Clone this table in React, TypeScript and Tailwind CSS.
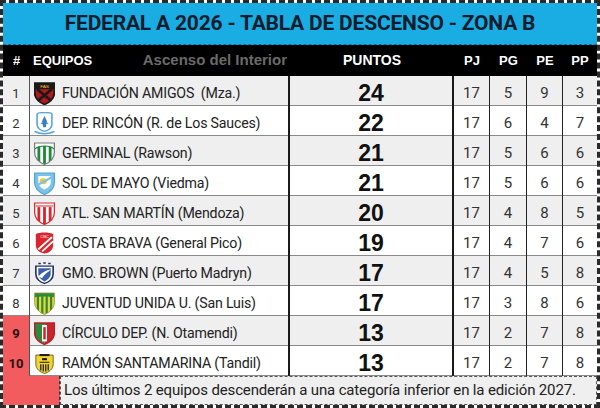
import React from "react";

type Team = {
  pos: number;
  name: string;
  place: string;
  pts: number;
  pj: number;
  pg: number;
  pe: number;
  pp: number;
};

const teams: Team[] = [
  { pos: 1, name: "FUNDACIÓN AMIGOS", place: " (Mza.)", pts: 24, pj: 17, pg: 5, pe: 9, pp: 3 },
  { pos: 2, name: "DEP. RINCÓN", place: "(R. de Los Sauces)", pts: 22, pj: 17, pg: 6, pe: 4, pp: 7 },
  { pos: 3, name: "GERMINAL", place: "(Rawson)", pts: 21, pj: 17, pg: 5, pe: 6, pp: 6 },
  { pos: 4, name: "SOL DE MAYO", place: "(Viedma)", pts: 21, pj: 17, pg: 5, pe: 6, pp: 6 },
  { pos: 5, name: "ATL. SAN MARTÍN", place: "(Mendoza)", pts: 20, pj: 17, pg: 4, pe: 8, pp: 5 },
  { pos: 6, name: "COSTA BRAVA", place: "(General Pico)", pts: 19, pj: 17, pg: 4, pe: 7, pp: 6 },
  { pos: 7, name: "GMO. BROWN", place: "(Puerto Madryn)", pts: 17, pj: 17, pg: 4, pe: 5, pp: 8 },
  { pos: 8, name: "JUVENTUD UNIDA U.", place: "(San Luis)", pts: 17, pj: 17, pg: 3, pe: 8, pp: 6 },
  { pos: 9, name: "CÍRCULO DEP.", place: "(N. Otamendi)", pts: 13, pj: 17, pg: 2, pe: 7, pp: 8 },
  { pos: 10, name: "RAMÓN SANTAMARINA", place: "(Tandil)", pts: 13, pj: 17, pg: 2, pe: 7, pp: 8 },
];

const SHIELD = "M2 2 H18 V11 C18 17 14 21 10 23 C6 21 2 17 2 11 Z";

const Stripes: React.FC<{ id: string; a: string; b: string; n: number }> = ({ id, a, b, n }) => (
  <g clipPath={`url(#${id})`}>
    <rect x="0" y="0" width="20" height="24" fill={a} />
    {Array.from({ length: n }).map((_, i) =>
      i % 2 === 1 ? <rect key={i} x={2 + (16 / n) * i} y="0" width={16 / n} height="24" fill={b} /> : null
    )}
  </g>
);

const Badge: React.FC<{ pos: number }> = ({ pos }) => {
  const id = `clip${pos}`;
  let body: React.ReactNode = null;
  switch (pos) {
    case 1:
      body = (
        <>
          <path d={SHIELD} fill="#b3171b" stroke="#1a1a1a" strokeWidth="1.6" />
          <g clipPath={`url(#${id})`}>
            <rect x="0" y="2" width="20" height="6" fill="#1a1a1a" />
            <path d="M4 8 L16 20 M16 8 L4 20" stroke="#1a1a1a" strokeWidth="2.4" />
          </g>
          <text x="10" y="7" fontSize="4" fill="#f2c230" textAnchor="middle" fontFamily="Liberation Sans">FAS</text>
        </>
      );
      break;
    case 2:
      body = (
        <>
          <path d="M4 3 C4 1 16 1 16 3 V13 C16 17 13 19 10 20 C7 19 4 17 4 13 Z" fill="#ffffff" stroke="#5aa7d8" strokeWidth="1.3" />
          <path d="M10 5 L12 10 L11 16 H9 L8 10 Z" fill="#3b7fc0" />
          <path d="M7 12 H13" stroke="#3b7fc0" strokeWidth="1" />
          <path d="M2 20 C6 23 14 23 18 20" stroke="#5aa7d8" strokeWidth="1.6" fill="none" />
        </>
      );
      break;
    case 3:
      body = (
        <>
          <Stripes id={id} a="#ffffff" b="#1f8a3a" n={7} />
          <g clipPath={`url(#${id})`}>
            <path d="M0 0 H20 V8 C16 4 4 4 0 8 Z" fill="#ffffff" />
            <path d="M2 8 C6 4 14 4 18 8" stroke="#1f8a3a" strokeWidth="1" fill="none" />
          </g>
          <path d={SHIELD} fill="none" stroke="#7a7a7a" strokeWidth="1" />
        </>
      );
      break;
    case 4:
      body = (
        <>
          <path d={SHIELD} fill="#7cc3ea" stroke="#4fa3d6" strokeWidth="1" />
          <path d="M5 5 H15 V11 C15 15 12 17 10 18 C8 17 5 15 5 11 Z" fill="#ffffff" />
          <circle cx="9" cy="10" r="3" fill="#f0c43c" />
          <path d="M4 14 L16 6" stroke="#7cc3ea" strokeWidth="2" />
        </>
      );
      break;
    case 5:
      body = (
        <>
          <Stripes id={id} a="#ffffff" b="#d7262e" n={7} />
          <g clipPath={`url(#${id})`}>
            <rect x="0" y="0" width="20" height="6" fill="#ffffff" />
            <path d="M3 5 H17" stroke="#d7262e" strokeWidth="1" />
          </g>
          <path d={SHIELD} fill="none" stroke="#d7262e" strokeWidth="1" />
        </>
      );
      break;
    case 6:
      body = (
        <>
          <path d="M3 3 C6 1 14 1 17 3 V14 C17 19 13 22 10 22 C7 22 3 19 3 14 Z" fill="#d9252e" />
          <path d="M5 18 L16 6 M8 20 L17 10" stroke="#ffffff" strokeWidth="1.6" />
          <text x="10" y="7" fontSize="3.5" fill="#ffffff" textAnchor="middle" fontFamily="Liberation Sans">CBC</text>
        </>
      );
      break;
    case 7:
      body = (
        <>
          <path d="M3 5 H17 V13 C17 18 13 21 10 22 C7 21 3 18 3 13 Z" fill="#ffffff" stroke="#23315f" strokeWidth="1.3" />
          <path d="M5 7 H15 V13 C15 16 12 19 10 20 C8 19 5 16 5 13 Z" fill="#3b5fa8" />
          <path d="M5 15 C9 10 12 9 16 8 C12 11 10 13 8 17 Z" fill="#ffffff" />
          <path d="M5 2.5 H7 M9 2 H11 M13 2.5 H15" stroke="#23315f" strokeWidth="1.4" />
        </>
      );
      break;
    case 8:
      body = (
        <>
          <Stripes id={id} a="#e9d43a" b="#2c8a3a" n={9} />
          <g clipPath={`url(#${id})`}>
            <path d="M0 0 H20 V7 C15 5 5 5 0 7 Z" fill="#2c8a3a" />
          </g>
          <path d={SHIELD} fill="none" stroke="#9a9a3a" strokeWidth="0.8" />
        </>
      );
      break;
    case 9:
      body = (
        <>
          <g clipPath={`url(#${id})`}>
            <rect x="0" y="0" width="10" height="24" fill="#2a8a3e" />
            <rect x="10" y="0" width="10" height="24" fill="#c8262d" />
            <rect x="8" y="4" width="4" height="16" fill="#ffffff" />
            <rect x="9" y="6" width="2" height="12" fill="#c8262d" />
          </g>
          <path d={SHIELD} fill="none" stroke="#b72229" strokeWidth="1.4" />
        </>
      );
      break;
    default:
      body = (
        <>
          <path d="M3 4 H17 V13 C17 18 13 21 10 22 C7 21 3 18 3 13 Z" fill="#f2d431" stroke="#6b5a10" strokeWidth="0.8" />
          <path d="M6 3 H14 V5 H6 Z" fill="#1a1a1a" />
          <path d="M6 11 H14 M7 13 V19 M9 13 V20 M11 13 V20 M13 13 V19" stroke="#1a1a1a" strokeWidth="1" />
          <path d="M8 7 H12 V9 H8 Z" fill="#1a1a1a" />
        </>
      );
  }
  return (
    <svg width="21" height="23" viewBox="1.5 1 17 22.5" preserveAspectRatio="none" className="shrink-0">
      <defs>
        <clipPath id={id}>
          <path d={SHIELD} />
        </clipPath>
      </defs>
      {body}
    </svg>
  );
};

const cols = "grid grid-cols-[27px_260px_164px_36px_37px_36px_34px]";
const roboto = { fontFamily: '"Roboto", "Liberation Sans", sans-serif' };

export default function App() {
  return (
    <div
      className="w-[600px] h-[408px] overflow-hidden bg-white border-[3px] border-dashed border-[#2a2a2a]"
      style={{ fontFamily: '"Liberation Sans", Arial, sans-serif' }}
    >
      <div className="h-[42px] bg-[#1aade4] flex items-center justify-center border-b border-dashed border-[#0e6f96]">
        <h1 className="text-[21px] font-bold text-[#0f1c2c] tracking-[-0.2px]" style={roboto}>
          FEDERAL A 2026 - TABLA DE DESCENSO - ZONA B
        </h1>
      </div>

      <div className={`${cols} h-[31px] bg-black text-white font-bold text-[13px] items-center`}>
        <div className="text-center">#</div>
        <div className="flex items-center justify-between pl-[3px] pr-[3px]">
          <span>EQUIPOS</span>
          <span className="text-[#6a6a6a] text-[15px]">Ascenso del Interior</span>
        </div>
        <div className="text-center text-[14px]">PUNTOS</div>
        <div className="text-center">PJ</div>
        <div className="text-center">PG</div>
        <div className="text-center">PE</div>
        <div className="text-center">PP</div>
      </div>

      {teams.map((t) => {
        const relegated = t.pos >= 9;
        const bg = t.pos % 2 === 1 ? "bg-[#efefef]" : "bg-white";
        return (
          <div key={t.pos} className={`${cols} h-[30px] ${bg} border-b border-[#8a8a8a]`}>
            <div
              className={`flex items-center justify-center border-r border-[#555] text-[13px] ${
                relegated ? "bg-[#f25c5f] font-bold text-[#2a1010]" : "text-[#333]"
              }`}
              style={roboto}
            >
              {t.pos}
            </div>
            <div
              className="flex items-center gap-[7px] pl-[4px] border-r-2 border-[#1a1a1a] text-[14.2px] text-[#222] tracking-[-0.2px]"
              style={roboto}
            >
              <Badge pos={t.pos} />
              <span className="whitespace-pre">
                {t.name} {t.place}
              </span>
            </div>
            <div className="flex items-center justify-center border-r-2 border-[#1a1a1a] text-[23px] font-bold text-[#111]">
              {t.pts}
            </div>
            {[t.pj, t.pg, t.pe, t.pp].map((v, i) => (
              <div
                key={i}
                className={`flex items-center justify-center text-[15px] text-[#333] ${i < 3 ? "border-r border-[#222]" : ""}`}
                style={roboto}
              >
                {v}
              </div>
            ))}
          </div>
        );
      })}

      <div className="flex h-[29px]">
        <div className="w-[57px] bg-[#f25c5f] border-r border-dashed border-[#333]" />
        <div
          className="flex-1 flex items-center pl-[3px] bg-[#efefef] border border-dashed border-[#555] text-[15px] text-[#222] tracking-[-0.15px]"
          style={roboto}
        >
          Los últimos 2 equipos descenderán a una categoría inferior en la edición 2027.
        </div>
      </div>
    </div>
  );
}
